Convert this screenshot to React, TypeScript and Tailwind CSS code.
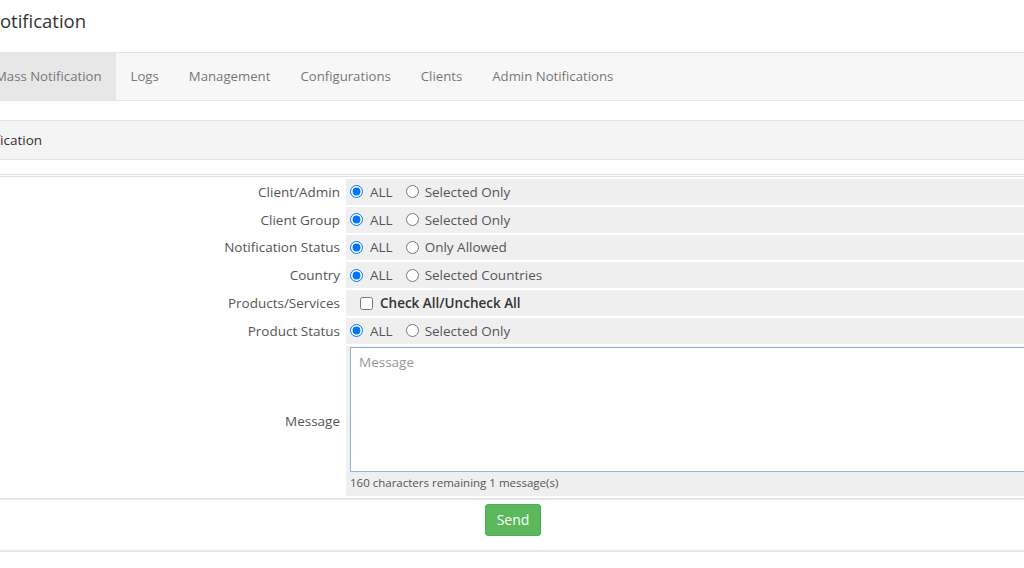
import { useState } from "react";

const rows = [
  { label: "Client/Admin", kind: "radio", name: "client", other: "Selected Only" },
  { label: "Client Group", kind: "radio", name: "group", other: "Selected Only" },
  { label: "Notification Status", kind: "radio", name: "status", other: "Only Allowed" },
  { label: "Country", kind: "radio", name: "country", other: "Selected Countries" },
  { label: "Products/Services", kind: "check", name: "products", other: "Check All/Uncheck All" },
  { label: "Product Status", kind: "radio", name: "pstatus", other: "Selected Only" },
];

const tabs = ["Mass Notification", "Logs", "Management", "Configurations", "Clients", "Admin Notifications"];

export default function App() {
  const [message, setMessage] = useState("");
  const remaining = 160 - message.length;

  return (
    <div
      className="w-[1024px] h-[568px] overflow-hidden bg-white text-[#555]"
      style={{ fontFamily: "'Open Sans', 'Liberation Sans', sans-serif" }}
    >
      {/* Title */}
      <h1 className="ml-[-14px] pt-[8px] h-[52px] text-[18.5px] leading-[26px] text-[#333] font-normal">
        Notification
      </h1>

      {/* Tabs */}
      <ul className="ml-[-20px] w-[1100px] h-[49px] flex bg-[#f7f7f7] border-y border-[#e5e5e5]">
        {tabs.map((t, i) => (
          <li
            key={t}
            className={`px-[15px] flex items-center text-[13.2px] text-[#777] ${i === 0 ? "bg-[#e7e7e7] text-[#666] pr-[14px]" : ""}`}
          >
            {t}
          </li>
        ))}
      </ul>

      {/* Panel heading */}
      <div className="mt-[19px] ml-[-46px] w-[1100px] h-[40px] flex items-center px-[15px] bg-[#f4f4f4] border-y border-[#e3e3e3] text-[13.5px] text-[#333]">
        Notification
      </div>

      {/* Form */}
      <div className="mt-[14px] w-[1100px] border-t-[3px] border-double border-[#e0e0e0]">
        <table className="border-separate border-spacing-[2px] w-full text-[13.5px]">
          <tbody>
            {rows.map((r) => (
              <tr key={r.name} className="h-[25.8px]">
                <td className="w-[342px] text-right pr-[4px] text-[#555] leading-[20px]">{r.label}</td>
                <td className="bg-[#efefef] pl-[4px] leading-[20px]">
                  {r.kind === "radio" ? (
                    <div className="flex items-center text-[#555]">
                      <label className="flex items-center">
                        <input type="radio" name={r.name} defaultChecked className="m-0 w-[13px] h-[13px]" />
                        <span className="ml-[7px]">ALL</span>
                      </label>
                      <label className="flex items-center ml-[13px]">
                        <input type="radio" name={r.name} className="m-0 w-[13px] h-[13px]" />
                        <span className="ml-[6px]">{r.other}</span>
                      </label>
                    </div>
                  ) : (
                    <label className="flex items-center pl-[10px]">
                      <input type="checkbox" className="m-0 w-[13px] h-[13px]" />
                      <span className="ml-[7px] font-semibold text-[#333]">{r.other}</span>
                    </label>
                  )}
                </td>
              </tr>
            ))}
            <tr>
              <td className="text-right pr-[4px] align-middle">Message</td>
              <td className="bg-[#efefef] pt-[1px] pb-[5px] pl-[4px]">
                <textarea
                  value={message}
                  onChange={(e) => setMessage(e.target.value)}
                  placeholder="Message"
                  className="block w-full h-[125px] bg-white border border-[#8fb5dc] px-[8px] py-[4px] text-[13.5px] text-[#555] placeholder:text-[#999] outline-none resize-none"
                />
                <div className="mt-[3px] text-[11.5px] leading-[16px] text-[#555]">
                  {remaining} characters remaining 1 message(s)
                </div>
              </td>
            </tr>
          </tbody>
        </table>
        <div className="border-t-[2px] border-[#e5e5e5] pt-[4px] pb-[14px]">
          <button className="block ml-[485px] w-[56px] h-[32px] rounded-[3px] bg-[#5cb85c] text-white text-[14px] border border-[#4cae4c]">
            Send
          </button>
        </div>
        <div className="border-t-[2px] border-[#e8e8e8]" />
      </div>
    </div>
  );
}
